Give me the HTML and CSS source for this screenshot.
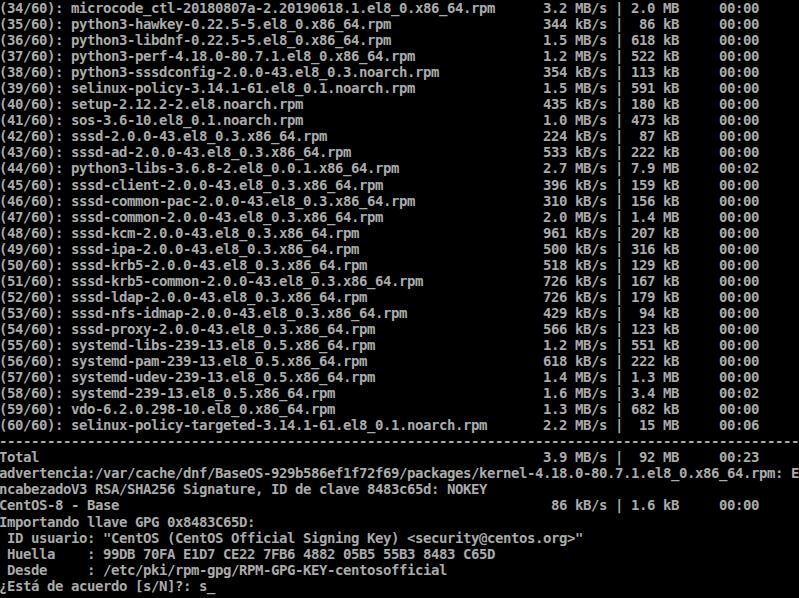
FILE: index.html
```html
<!DOCTYPE html>
<html lang="es">
<head>
    <meta charset="UTF-8">
    <meta name="viewport" content="width=device-width, initial-scale=1.0">
    <title>dnf update - consola</title>
    <link rel="stylesheet" href="styles.css">
</head>
<body>
    <div class="console">
        <!-- Descargas -->
        <div class="row"><span class="pkg">(34/60): microcode_ctl-20180807a-2.20190618.1.el8_0.x86_64.rpm</span><span class="rate">3.2 MB/s</span><span class="sep">|</span><span class="size">2.0 MB</span><span class="time">00:00</span></div>
        <div class="row"><span class="pkg">(35/60): python3-hawkey-0.22.5-5.el8_0.x86_64.rpm</span><span class="rate">344 kB/s</span><span class="sep">|</span><span class="size">86 kB</span><span class="time">00:00</span></div>
        <div class="row"><span class="pkg">(36/60): python3-libdnf-0.22.5-5.el8_0.x86_64.rpm</span><span class="rate">1.5 MB/s</span><span class="sep">|</span><span class="size">618 kB</span><span class="time">00:00</span></div>
        <div class="row"><span class="pkg">(37/60): python3-perf-4.18.0-80.7.1.el8_0.x86_64.rpm</span><span class="rate">1.2 MB/s</span><span class="sep">|</span><span class="size">522 kB</span><span class="time">00:00</span></div>
        <div class="row"><span class="pkg">(38/60): python3-sssdconfig-2.0.0-43.el8_0.3.noarch.rpm</span><span class="rate">354 kB/s</span><span class="sep">|</span><span class="size">113 kB</span><span class="time">00:00</span></div>
        <div class="row"><span class="pkg">(39/60): selinux-policy-3.14.1-61.el8_0.1.noarch.rpm</span><span class="rate">1.5 MB/s</span><span class="sep">|</span><span class="size">591 kB</span><span class="time">00:00</span></div>
        <div class="row"><span class="pkg">(40/60): setup-2.12.2-2.el8.noarch.rpm</span><span class="rate">435 kB/s</span><span class="sep">|</span><span class="size">180 kB</span><span class="time">00:00</span></div>
        <div class="row"><span class="pkg">(41/60): sos-3.6-10.el8_0.1.noarch.rpm</span><span class="rate">1.0 MB/s</span><span class="sep">|</span><span class="size">473 kB</span><span class="time">00:00</span></div>
        <div class="row"><span class="pkg">(42/60): sssd-2.0.0-43.el8_0.3.x86_64.rpm</span><span class="rate">224 kB/s</span><span class="sep">|</span><span class="size">87 kB</span><span class="time">00:00</span></div>
        <div class="row"><span class="pkg">(43/60): sssd-ad-2.0.0-43.el8_0.3.x86_64.rpm</span><span class="rate">533 kB/s</span><span class="sep">|</span><span class="size">222 kB</span><span class="time">00:00</span></div>
        <div class="row"><span class="pkg">(44/60): python3-libs-3.6.8-2.el8_0.0.1.x86_64.rpm</span><span class="rate">2.7 MB/s</span><span class="sep">|</span><span class="size">7.9 MB</span><span class="time">00:02</span></div>
        <div class="row"><span class="pkg">(45/60): sssd-client-2.0.0-43.el8_0.3.x86_64.rpm</span><span class="rate">396 kB/s</span><span class="sep">|</span><span class="size">159 kB</span><span class="time">00:00</span></div>
        <div class="row"><span class="pkg">(46/60): sssd-common-pac-2.0.0-43.el8_0.3.x86_64.rpm</span><span class="rate">310 kB/s</span><span class="sep">|</span><span class="size">156 kB</span><span class="time">00:00</span></div>
        <div class="row"><span class="pkg">(47/60): sssd-common-2.0.0-43.el8_0.3.x86_64.rpm</span><span class="rate">2.0 MB/s</span><span class="sep">|</span><span class="size">1.4 MB</span><span class="time">00:00</span></div>
        <div class="row"><span class="pkg">(48/60): sssd-kcm-2.0.0-43.el8_0.3.x86_64.rpm</span><span class="rate">961 kB/s</span><span class="sep">|</span><span class="size">207 kB</span><span class="time">00:00</span></div>
        <div class="row"><span class="pkg">(49/60): sssd-ipa-2.0.0-43.el8_0.3.x86_64.rpm</span><span class="rate">500 kB/s</span><span class="sep">|</span><span class="size">316 kB</span><span class="time">00:00</span></div>
        <div class="row"><span class="pkg">(50/60): sssd-krb5-2.0.0-43.el8_0.3.x86_64.rpm</span><span class="rate">518 kB/s</span><span class="sep">|</span><span class="size">129 kB</span><span class="time">00:00</span></div>
        <div class="row"><span class="pkg">(51/60): sssd-krb5-common-2.0.0-43.el8_0.3.x86_64.rpm</span><span class="rate">726 kB/s</span><span class="sep">|</span><span class="size">167 kB</span><span class="time">00:00</span></div>
        <div class="row"><span class="pkg">(52/60): sssd-ldap-2.0.0-43.el8_0.3.x86_64.rpm</span><span class="rate">726 kB/s</span><span class="sep">|</span><span class="size">179 kB</span><span class="time">00:00</span></div>
        <div class="row"><span class="pkg">(53/60): sssd-nfs-idmap-2.0.0-43.el8_0.3.x86_64.rpm</span><span class="rate">429 kB/s</span><span class="sep">|</span><span class="size">94 kB</span><span class="time">00:00</span></div>
        <div class="row"><span class="pkg">(54/60): sssd-proxy-2.0.0-43.el8_0.3.x86_64.rpm</span><span class="rate">566 kB/s</span><span class="sep">|</span><span class="size">123 kB</span><span class="time">00:00</span></div>
        <div class="row"><span class="pkg">(55/60): systemd-libs-239-13.el8_0.5.x86_64.rpm</span><span class="rate">1.2 MB/s</span><span class="sep">|</span><span class="size">551 kB</span><span class="time">00:00</span></div>
        <div class="row"><span class="pkg">(56/60): systemd-pam-239-13.el8_0.5.x86_64.rpm</span><span class="rate">618 kB/s</span><span class="sep">|</span><span class="size">222 kB</span><span class="time">00:00</span></div>
        <div class="row"><span class="pkg">(57/60): systemd-udev-239-13.el8_0.5.x86_64.rpm</span><span class="rate">1.4 MB/s</span><span class="sep">|</span><span class="size">1.3 MB</span><span class="time">00:00</span></div>
        <div class="row"><span class="pkg">(58/60): systemd-239-13.el8_0.5.x86_64.rpm</span><span class="rate">1.6 MB/s</span><span class="sep">|</span><span class="size">3.4 MB</span><span class="time">00:02</span></div>
        <div class="row"><span class="pkg">(59/60): vdo-6.2.0.298-10.el8_0.x86_64.rpm</span><span class="rate">1.3 MB/s</span><span class="sep">|</span><span class="size">682 kB</span><span class="time">00:00</span></div>
        <div class="row"><span class="pkg">(60/60): selinux-policy-targeted-3.14.1-61.el8_0.1.noarch.rpm</span><span class="rate">2.2 MB/s</span><span class="sep">|</span><span class="size">15 MB</span><span class="time">00:06</span></div>

        <!-- Total -->
        <div class="line">----------------------------------------------------------------------------------------------------</div>
        <div class="row"><span class="pkg">Total</span><span class="rate">3.9 MB/s</span><span class="sep">|</span><span class="size">92 MB</span><span class="time">00:23</span></div>

        <!-- Llave GPG -->
        <div class="line">advertencia:/var/cache/dnf/BaseOS-929b586ef1f72f69/packages/kernel-4.18.0-80.7.1.el8_0.x86_64.rpm: E</div>
        <div class="line">ncabezadoV3 RSA/SHA256 Signature, ID de clave 8483c65d: NOKEY</div>
        <div class="row"><span class="pkg">CentOS-8 - Base</span><span class="rate">86 kB/s</span><span class="sep">|</span><span class="size">1.6 kB</span><span class="time">00:00</span></div>
        <div class="line">Importando llave GPG 0x8483C65D:</div>
        <div class="line"> ID usuario: "CentOS (CentOS Official Signing Key) &lt;security@centos.org&gt;"</div>
        <div class="line"> Huella    : 99DB 70FA E1D7 CE22 7FB6 4882 05B5 55B3 8483 C65D</div>
        <div class="line"> Desde     : /etc/pki/rpm-gpg/RPM-GPG-KEY-centosofficial</div>
        <div class="line">¿Está de acuerdo [s/N]?: s<span class="cursor">_</span></div>
    </div>
</body>
</html>
```

FILE: styles.css
```css
* {
    margin: 0;
    padding: 0;
    box-sizing: border-box;
}

body {
    background: #000;
    color: #aaaaaa;
    font-family: 'DejaVu Sans Mono', 'Liberation Mono', monospace;
    font-size: 14px;
    font-weight: bold;
    letter-spacing: -0.4287px;
    line-height: 16.05px;
    height: 598px;
    overflow: hidden;
}

/* 100 columnas de 8px */
.console {
    margin-left: -1px;
}

.line,
.row span {
    white-space: pre;
}

.row {
    display: flex;
}

.pkg {
    width: 544px;
}

.rate {
    width: 64px;
    text-align: right;
}

.sep {
    width: 24px;
    text-align: center;
}

.size {
    width: 48px;
    text-align: right;
}

.time {
    margin-left: 40px;
}

.cursor {
    animation: blink 1s steps(1) infinite;
}

@keyframes blink {
    50% {
        opacity: 0;
    }
}
```
